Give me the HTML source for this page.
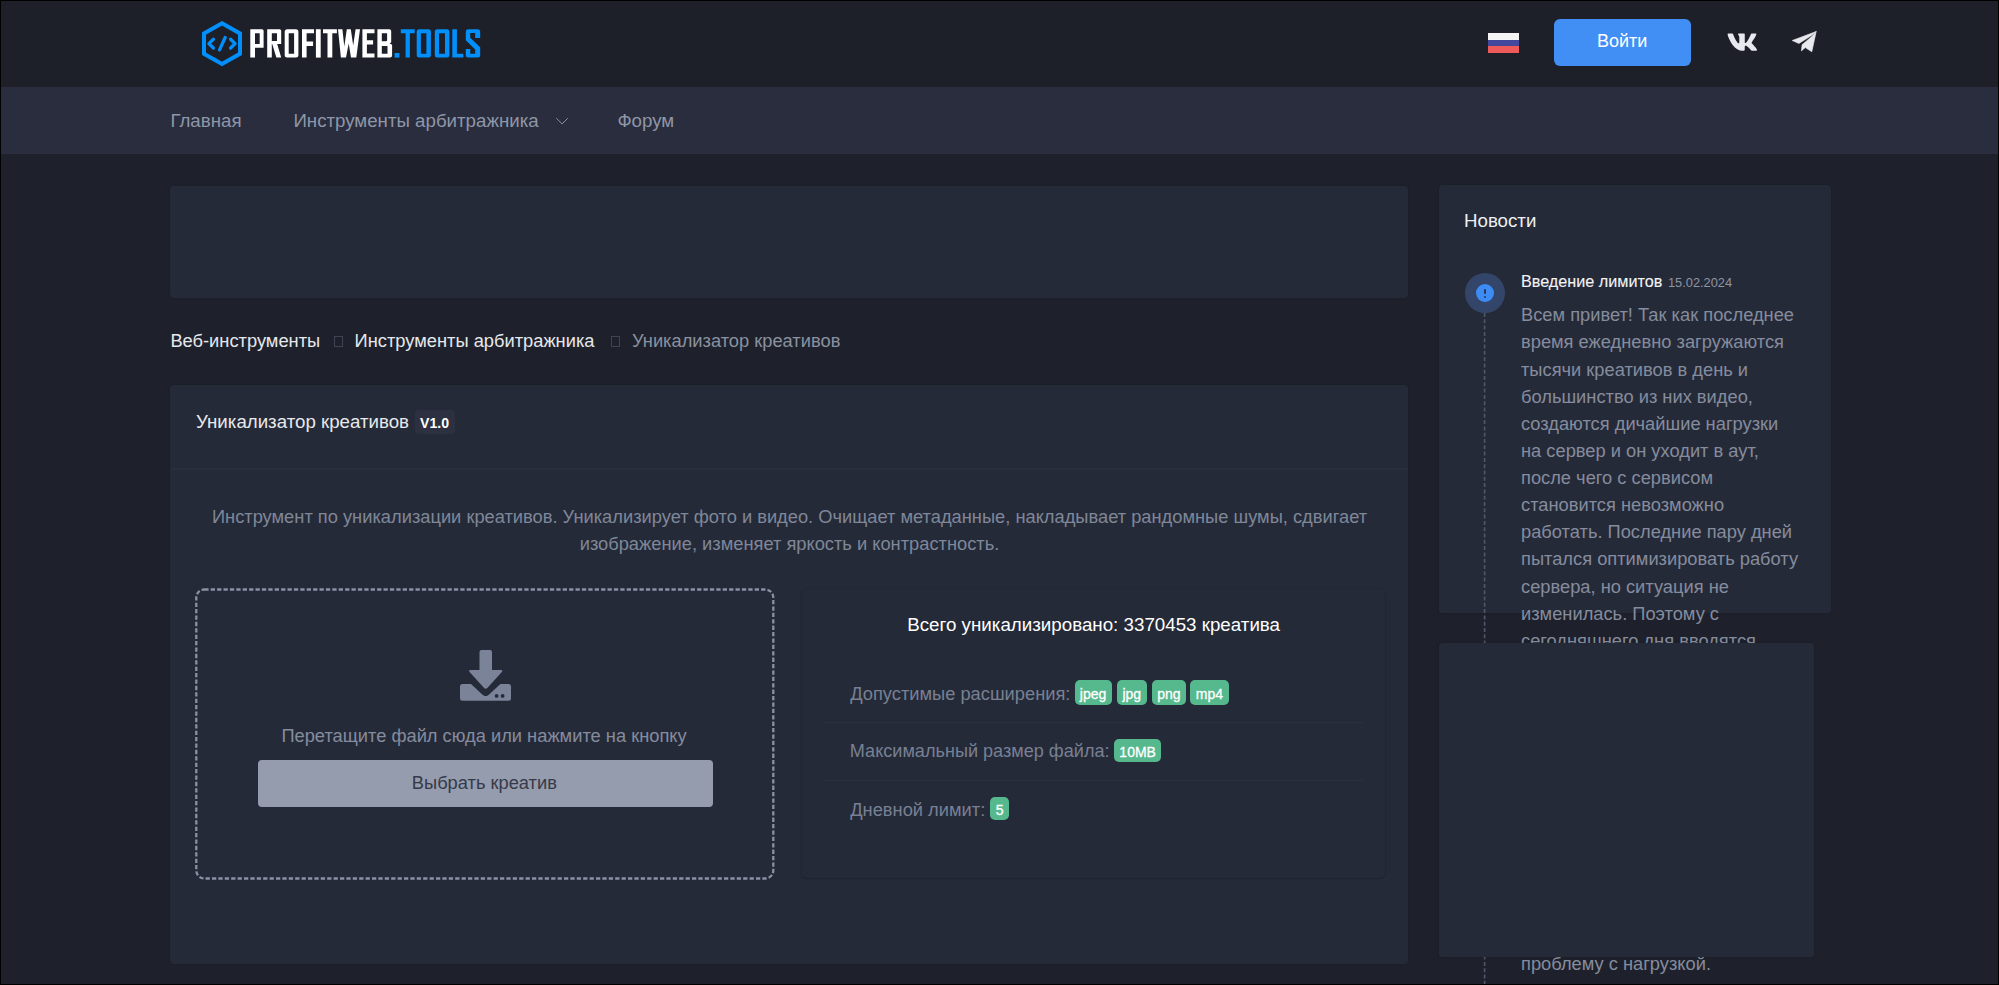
<!DOCTYPE html>
<html><head><meta charset="utf-8">
<style>
*{box-sizing:border-box;margin:0;padding:0}
html,body{width:1999px;height:985px;overflow:hidden;background:#1e212b;font-family:"Liberation Sans",sans-serif}
.abs{position:absolute}
.t{position:absolute;white-space:nowrap}
#frame{position:absolute;left:0;top:0;width:1999px;height:985px;border:1px solid #000;z-index:100;pointer-events:none}
</style></head><body>
<div class="abs" style="left:0px;top:0px;width:1999px;height:87px;background:#1d2029;"></div>

  <svg class="abs" style="left:0;top:0" width="520" height="87" viewBox="0 0 520 87">
  <g fill="none" stroke="#008ffb" stroke-linejoin="miter">
    <polygon points="222,23.2 240,33.4 240,53.8 222,64 204,53.8 204,33.4" stroke-width="4"/>
  </g>
  <g fill="none" stroke="#008ffb" stroke-width="3.3" stroke-linecap="round" stroke-linejoin="round">
    <polyline points="213.4,39.2 208.9,43.6 213.4,48.0"/>
    <line x1="225.2" y1="37.5" x2="219.5" y2="49.9"/>
    <polyline points="230.6,39.2 235.1,43.6 230.6,48.0"/>
  </g>
  <g fill="#ffffff">
    <path fill-rule="evenodd" d="M250.3,29.2H262Q263.6,29.2 263.6,30.8V47.7H255V57.6H250.3Z M255,33.3V44H259.7V33.3Z"/>
    <path fill-rule="evenodd" d="M267.2,29.2H279.6Q281.2,29.2 281.2,30.8V44.1H277.2L281.2,57.6H276.4L272.2,44.1H271.8V57.6H267.2Z M271.8,33.3V40.9H277V33.3Z"/>
    <path fill-rule="evenodd" d="M287.2,29.2H295.9Q298.4,29.2 298.4,31.7V55.1Q298.4,57.6 295.9,57.6H287.2Q284.7,57.6 284.7,55.1V31.7Q284.7,29.2 287.2,29.2Z M288.7,33.3V53.7H294.1V33.3Z"/>
    <path d="M302,29.2H314V33.3H306.6V41.6H313.1V45.9H306.6V57.6H302Z"/>
    <path d="M315.9,29.2H320.7V57.6H315.9Z"/>
    <path d="M323,29.2H336.9V33.3H332.3V57.6H327.5V33.3H323Z"/>
    <path d="M338,29.2H342.4L344.3,46.5L346.8,29.2H350.8L353.2,45.5L355.6,29.2H360L356.3,57.6H351L348.7,43.5L346,57.6H340.9Z"/>
    <path d="M362.4,29.2H374.5V33.3H366.9V40.2H373.1V44.5H366.9V53.5H374.5V57.6H362.4Z"/>
    <path fill-rule="evenodd" d="M377.4,29.2H389.4Q391.2,29.2 391.2,31V42.3L389.6,43.4L392.1,44.8V55.6Q392.1,57.6 390.1,57.6H377.4Z M381.8,33.3V41.3H386Q387.1,41.3 387.1,40.2V33.3Z M381.8,45.9V53.7H387.5V45.9Z"/>
  </g>
  <g fill="#008ffb">
    <path d="M394.6,53H399.4V57.6H394.6Z"/>
    <path d="M400.8,29.2H414.7V33.3H409.9V57.6H405.6V33.3H400.8Z"/>
    <path fill-rule="evenodd" d="M419.2,29.2H428.4Q430.9,29.2 430.9,31.7V55.1Q430.9,57.6 428.4,57.6H419.2Q416.7,57.6 416.7,55.1V31.7Q416.7,29.2 419.2,29.2Z M420.9,33.3V53.8H426.4V33.3Z"/>
    <path fill-rule="evenodd" d="M437.3,29.2H446.9Q449.4,29.2 449.4,31.7V55.1Q449.4,57.6 446.9,57.6H437.3Q434.8,57.6 434.8,55.1V31.7Q434.8,29.2 437.3,29.2Z M439,33.3V53.8H445V33.3Z"/>
    <path d="M452.3,29.2H456.9V53.7H463.3V57.6H452.3Z"/>
    <path d="M468.3,29.2H477.7Q480.2,29.2 480.2,31.7V38.1H475.2V33.1H470.2V37.7L480.2,47.3V55.1Q480.2,57.6 477.7,57.6H468.3Q465.8,57.6 465.8,55.1V49.1H470.2V53.7H475.2V49.5L465.8,40.2V31.7Q465.8,29.2 468.3,29.2Z"/>
  </g>
</svg>
<div class="abs" style="left:1488px;top:33px;width:31px;height:20px">
  <div style="height:6.5px;background:#f4f4f4"></div><div style="height:6.7px;background:#42489b"></div><div style="height:6.8px;background:#ee5a5a"></div>
</div>
<svg class="abs" style="left:1700px;top:0" width="150" height="87" viewBox="1700 0 150 87">
  <g fill="#e8e9ee">
    <g transform="translate(1726.6,28.2) scale(0.0545)"><path d="M545 117.7c3.7-12.5 0-21.7-17.8-21.7h-58.9c-15 0-21.9 7.9-25.6 21.7 0 0-34.9 93.5-74.5 137.7-12.9 12.9-18.7 16.9-25.7 16.9-3.7 0-9.1-4-9.1-16.5V117.7c0-15-4.2-21.7-16.6-21.7h-92.6c-9.4 0-15 7-15 13.5 0 14.2 21.2 17.5 23.4 57.5v86.8c0 19-3.4 22.5-10.9 22.5-20 0-68.6-73.4-97.4-157.4-5.8-16.3-11.5-22.9-26.6-22.9H38.8c-16.8 0-20.2 7.9-20.2 16.6 0 15.6 20 93.1 93.1 195.5C160.4 378.1 229 416 291.4 416c37.5 0 42.1-8.4 42.1-22.9 0-66.8-3.4-73.1 15.4-73.1 8.7 0 23.7 4.4 58.7 38.1 40 40 46.6 57.9 69 57.9h58.9c16.8 0 25.3-8.4 20.4-25-11.2-34.9-86.9-106.7-90.3-111.5-8.7-11.2-6.2-16.2 0-26.2.1-.1 72-101.3 79.4-135.6z"/></g>
    <polygon points="1792.2,40.5 1816.2,31.5 1811.9,35.3 1798.9,43.5" stroke="#e8e9ee" stroke-width="0.6" stroke-linejoin="round"/>
    <polygon points="1816.2,31.5 1811.8,51.8 1805.3,47.6 1801.4,50.9 1802.1,44.7 1812.4,36.0" stroke="#e8e9ee" stroke-width="0.6" stroke-linejoin="round"/>
  </g>
</svg>

<div class="abs" style="left:1554px;top:19px;width:137px;height:47px;background:#418ff5;border-radius:6px"></div>
<div class="t" style="left:1597px;top:30.81px;font-size:18.0px;line-height:20.7px;color:#ffffff;font-weight:400;">Войти</div>
<div class="abs" style="left:0px;top:87px;width:1999px;height:67.2px;background:#292d3d;"></div>
<div class="t" style="left:170.4px;top:109.77px;font-size:18.7px;line-height:21.5px;color:#8f96a8;font-weight:400;">Главная</div>
<div class="t" style="left:293.4px;top:109.77px;font-size:18.7px;line-height:21.5px;color:#8f96a8;font-weight:400;">Инструменты арбитражника</div>
<svg class="abs" style="left:550px;top:110px" width="24" height="20"><polyline points="556.3,118.2 562.1,123.9 567.8,118.2" transform="translate(-550,-110)" fill="none" stroke="#8a91a3" stroke-width="1.0"/></svg>
<div class="t" style="left:617.4px;top:109.77px;font-size:18.7px;line-height:21.5px;color:#8f96a8;font-weight:400;">Форум</div>
<div class="abs" style="left:170.3px;top:185.5px;width:1237.9px;height:112.3px;background:#252a38;border-radius:3.5px;box-shadow:0 0 2px rgba(0,0,0,0.22)"></div>
<div class="t" style="left:170.4px;top:329.64px;font-size:18.3px;line-height:21.04px;color:#e6e8ec;font-weight:400;">Веб-инструменты</div>
<div class="abs" style="left:334px;top:336px;width:9px;height:11px;background:transparent;border:1px solid #3f4455"></div>
<div class="t" style="left:354.6px;top:329.64px;font-size:18.3px;line-height:21.04px;color:#e6e8ec;font-weight:400;">Инструменты арбитражника</div>
<div class="abs" style="left:610.5px;top:336px;width:9px;height:11px;background:transparent;border:1px solid #3f4455"></div>
<div class="t" style="left:632px;top:329.64px;font-size:18.3px;line-height:21.04px;color:#8b91a0;font-weight:400;">Уникализатор креативов</div>
<div class="abs" style="left:170.3px;top:385px;width:1237.9px;height:579px;background:#252a38;border-radius:3.5px;box-shadow:0 0 2px rgba(0,0,0,0.22)"></div>
<div class="abs" style="left:171px;top:468px;width:1237px;height:1.6px;background:#292e3d;"></div>
<div class="t" style="left:196px;top:411.17px;font-size:18.7px;line-height:21.5px;color:#e8e9ec;font-weight:400;">Уникализатор креативов</div>
<div class="abs" style="left:415.4px;top:410px;width:39.2px;height:24.3px;background:#2c3040;border-radius:4px"></div>
<div class="t" style="left:420px;top:415.41px;font-size:14.1px;line-height:16.21px;color:#ffffff;font-weight:700;">V1.0</div>
<div class="t" style="left:171px;width:1237px;text-align:center;top:503.21px;font-size:18.3px;line-height:27.1px;color:#7f8799;white-space:normal">Инструмент по уникализации креативов. Уникализирует фото и видео. Очищает метаданные, накладывает рандомные шумы, сдвигает<br>изображение, изменяет яркость и контрастность.</div>
<svg class="abs" style="left:190px;top:583px" width="600" height="305"><rect x="6.3" y="6.5" width="577" height="289" rx="8" ry="8" fill="none" stroke="#8991a5" stroke-width="2.3" stroke-dasharray="4.3 2.1"/></svg>
<svg class="abs" style="left:459.6px;top:650.3px" width="51" height="51" viewBox="0 0 51 51">
<g fill="#7b8398">
<path d="M21.5,0H30Q32,0 32,2V20H40.6Q43.6,20 41.6,22.3L27.3,38Q25.7,39.6 24.1,38L9.8,22.3Q7.8,20 10.8,20H19.5V2Q19.5,0 21.5,0Z"/>
<path d="M2.5,34H11L22.3,44.6Q25.7,47.6 29.1,44.6L40.4,34H48.5Q51,34 51,36.5V48.2Q51,50.7 48.5,50.7H2.5Q0,50.7 0,48.2V36.5Q0,34 2.5,34Z"/>
</g>
<circle cx="36.6" cy="45.9" r="1.9" fill="#252a38"/><circle cx="42.6" cy="45.9" r="1.9" fill="#252a38"/>
</svg>
<div class="t" style="left:281.4px;top:724.94px;font-size:18.3px;line-height:21.04px;color:#858c9f;font-weight:400;">Перетащите файл сюда или нажмите на кнопку</div>
<div class="abs" style="left:258px;top:760.2px;width:454.5px;height:46.8px;background:#959cae;border-radius:4px"></div>
<div class="t" style="left:411.8px;top:771.94px;font-size:18.3px;line-height:21.04px;color:#353a49;font-weight:400;">Выбрать креатив</div>
<div class="abs" style="left:802px;top:589px;width:583px;height:289px;background:transparent;border-radius:5px;box-shadow:0 1px 1px rgba(20,22,30,0.22), -1px 0 1px rgba(20,22,30,0.12), 1px 0 1px rgba(20,22,30,0.12)"></div>
<div class="t" style="left:907.2px;top:613.52px;font-size:18.75px;line-height:21.56px;color:#ffffff;font-weight:400;">Всего уникализировано: 3370453 креатива</div>
<div class="t" style="left:850.2px;top:682.64px;font-size:18.3px;line-height:21.04px;color:#788093;font-weight:400;">Допустимые расширения:</div>
<div class="abs" style="left:1074.6px;top:680.4px;width:37px;height:24.4px;background:#56b98e;border-radius:5px"></div>
<div class="t" style="left:1074.6px;top:685.70px;font-size:14.0px;line-height:16.1px;color:#ffffff;font-weight:400;width:37px;text-align:center;-webkit-text-stroke:0.3px #fff">jpeg</div>
<div class="abs" style="left:1116.8px;top:680.4px;width:30px;height:24.4px;background:#56b98e;border-radius:5px"></div>
<div class="t" style="left:1116.8px;top:685.70px;font-size:14.0px;line-height:16.1px;color:#ffffff;font-weight:400;width:30px;text-align:center;-webkit-text-stroke:0.3px #fff">jpg</div>
<div class="abs" style="left:1152px;top:680.4px;width:33.7px;height:24.4px;background:#56b98e;border-radius:5px"></div>
<div class="t" style="left:1152px;top:685.70px;font-size:14.0px;line-height:16.1px;color:#ffffff;font-weight:400;width:33.7px;text-align:center;-webkit-text-stroke:0.3px #fff">png</div>
<div class="abs" style="left:1190.3px;top:680.4px;width:38.3px;height:24.4px;background:#56b98e;border-radius:5px"></div>
<div class="t" style="left:1190.3px;top:685.70px;font-size:14.0px;line-height:16.1px;color:#ffffff;font-weight:400;width:38.3px;text-align:center;-webkit-text-stroke:0.3px #fff">mp4</div>
<div class="abs" style="left:824px;top:722px;width:540px;height:1px;background:#2b303e;"></div>
<div class="t" style="left:849.8px;top:740.72px;font-size:18.1px;line-height:20.82px;color:#788093;font-weight:400;">Максимальный размер файла:</div>
<div class="abs" style="left:1113.9px;top:738.8px;width:47.5px;height:23.3px;background:#56b98e;border-radius:5px"></div>
<div class="t" style="left:1113.9px;top:743.60px;font-size:14.0px;line-height:16.1px;color:#ffffff;font-weight:400;width:47.5px;text-align:center;-webkit-text-stroke:0.3px #fff">10MB</div>
<div class="abs" style="left:824px;top:780px;width:540px;height:1px;background:#2b303e;"></div>
<div class="t" style="left:850.2px;top:798.64px;font-size:18.3px;line-height:21.04px;color:#788093;font-weight:400;">Дневной лимит:</div>
<div class="abs" style="left:990px;top:796.8px;width:19.2px;height:23.3px;background:#56b98e;border-radius:5px"></div>
<div class="t" style="left:990px;top:801.60px;font-size:14.0px;line-height:16.1px;color:#ffffff;font-weight:400;width:19.2px;text-align:center;-webkit-text-stroke:0.3px #fff">5</div>
<div class="abs" style="left:1439px;top:185px;width:392px;height:428px;background:#252a38;border-radius:3.5px;box-shadow:0 0 2px rgba(0,0,0,0.22)"></div>
<div class="t" style="left:1464px;top:210.37px;font-size:18.7px;line-height:21.5px;color:#eef0f3;font-weight:400;">Новости</div>
<svg class="abs" style="left:1480px;top:312px" width="10" height="680"><line x1="4.6" y1="1" x2="4.6" y2="680" stroke="#50576a" stroke-width="1.6" stroke-dasharray="4 2.3"/></svg>
<div class="abs" style="left:1465px;top:272.8px;width:40px;height:40px;border-radius:50%;background:#33466a"></div>
<div class="abs" style="left:1476px;top:284.2px;width:18px;height:18px;border-radius:50%;background:#3d8bf5"></div>
<div class="abs" style="left:1483.7px;top:288.8px;width:2.6px;height:5.6px;background:#2a3550;border-radius:1px"></div>
<div class="abs" style="left:1483.7px;top:296.0px;width:2.6px;height:2.4px;background:#2a3550;border-radius:1.3px"></div>
<div class="t" style="left:1521px;top:272.37px;font-size:16.2px;line-height:18.63px;color:#f2f3f5;font-weight:400;-webkit-text-stroke:0.1px #f2f3f5">Введение лимитов</div>
<div class="t" style="left:1668px;top:275.80px;font-size:12.8px;line-height:14.72px;color:#8e94a3;font-weight:400;">15.02.2024</div>
<div class="t" style="left:1521px;top:304.34px;font-size:18.3px;line-height:21.04px;color:#858c9e;font-weight:400;">Всем привет! Так как последнее</div>
<div class="t" style="left:1521px;top:331.46px;font-size:18.3px;line-height:21.04px;color:#858c9e;font-weight:400;">время ежедневно загружаются</div>
<div class="t" style="left:1521px;top:358.58px;font-size:18.3px;line-height:21.04px;color:#858c9e;font-weight:400;">тысячи креативов в день и</div>
<div class="t" style="left:1521px;top:385.70px;font-size:18.3px;line-height:21.04px;color:#858c9e;font-weight:400;">большинство из них видео,</div>
<div class="t" style="left:1521px;top:412.82px;font-size:18.3px;line-height:21.04px;color:#858c9e;font-weight:400;">создаются дичайшие нагрузки</div>
<div class="t" style="left:1521px;top:439.94px;font-size:18.3px;line-height:21.04px;color:#858c9e;font-weight:400;">на сервер и он уходит в аут,</div>
<div class="t" style="left:1521px;top:467.06px;font-size:18.3px;line-height:21.04px;color:#858c9e;font-weight:400;">после чего с сервисом</div>
<div class="t" style="left:1521px;top:494.18px;font-size:18.3px;line-height:21.04px;color:#858c9e;font-weight:400;">становится невозможно</div>
<div class="t" style="left:1521px;top:521.30px;font-size:18.3px;line-height:21.04px;color:#858c9e;font-weight:400;">работать. Последние пару дней</div>
<div class="t" style="left:1521px;top:548.42px;font-size:18.3px;line-height:21.04px;color:#858c9e;font-weight:400;">пытался оптимизировать работу</div>
<div class="t" style="left:1521px;top:575.54px;font-size:18.3px;line-height:21.04px;color:#858c9e;font-weight:400;">сервера, но ситуация не</div>
<div class="t" style="left:1521px;top:602.66px;font-size:18.3px;line-height:21.04px;color:#858c9e;font-weight:400;">изменилась. Поэтому с</div>
<div class="t" style="left:1521px;top:629.78px;font-size:18.3px;line-height:21.04px;color:#858c9e;font-weight:400;">сегодняшнего дня вводятся</div>
<div class="t" style="left:1521px;top:953.44px;font-size:18.3px;line-height:21.04px;color:#858c9e;font-weight:400;">проблему с нагрузкой.</div>
<div class="abs" style="left:1439px;top:643px;width:375px;height:313.5px;background:#252a38;border-radius:3.5px;box-shadow:0 0 2px rgba(0,0,0,0.22)"></div>
<div id="frame"></div>
</body></html>
